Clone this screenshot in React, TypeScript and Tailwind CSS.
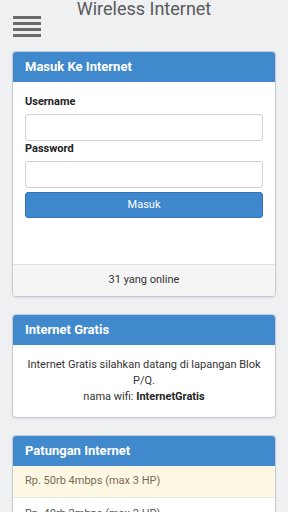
import 'react';

const Panel = ({ title, children }: { title: string; children: React.ReactNode }) => (
  <div className="rounded-[4px] border border-[#c3cbd6] bg-white shadow-[0_1px_2px_rgba(0,0,0,0.08)] overflow-hidden">
    <div className="h-[30px] bg-[#4089cd] px-3 flex items-center text-[13px] font-bold text-white">
      {title}
    </div>
    {children}
  </div>
);

const App = () => {
  return (
    <div
      className="h-[512px] w-[288px] overflow-hidden bg-[#eef0f2] px-3 text-[#333]"
      style={{ fontFamily: 'Roboto, "Noto Sans", sans-serif' }}
    >
      {/* header */}
      <div className="h-[16px] text-center text-[18px] leading-[18px] text-[#5a5a5a]">Wireless Internet</div>
      <div className="flex w-[28px] flex-col gap-[3px] ml-[1px]">
        <div className="h-[3px] bg-[#6b6b6b]" />
        <div className="h-[3px] bg-[#6b6b6b]" />
        <div className="h-[3px] bg-[#6b6b6b]" />
        <div className="h-[3px] bg-[#6b6b6b]" />
      </div>

      <div className="mt-[14px] flex flex-col gap-[17px]">
        {/* login */}
        <Panel title="Masuk Ke Internet">
          <div className="px-3 pt-3 pb-[46px]">
            <div className="text-[11px] font-bold leading-[15px] text-[#222]">Username</div>
            <input className="mt-[5px] block h-[27px] w-full rounded-[3px] border border-[#d0d0d0] bg-white" />
            <div className="text-[11px] font-bold leading-[15px] text-[#222]">Password</div>
            <input type="password" className="mt-[5px] block h-[27px] w-full rounded-[3px] border border-[#d0d0d0] bg-white" />
            <button className="mt-[4px] flex h-[26px] w-full items-center justify-center rounded-[3px] border border-[#3275b5] bg-[#3f88cd] text-[11px] text-white">
              Masuk
            </button>
          </div>
          <div className="flex h-[32px] items-center justify-center border-t border-[#e2e2e2] bg-[#f5f5f5] text-[11px] text-[#333]">
            31 yang online
          </div>
        </Panel>

        {/* free internet */}
        <Panel title="Internet Gratis">
          <div className="px-3 py-3 text-center text-[11px] leading-[16px] text-[#333]">
            Internet Gratis silahkan datang di lapangan Blok P/Q.
            <br />
            nama wifi: <b className="font-bold text-[#222]">InternetGratis</b>
          </div>
        </Panel>

        {/* patungan */}
        <Panel title="Patungan Internet">
          <div className="flex h-[32px] items-center border-b border-[#e6e6e6] bg-[#fcf8e3] px-3 text-[11px] text-[#7a6c55]">
            Rp. 50rb 4mbps (max 3 HP)
          </div>
          <div className="flex h-[32px] items-center bg-white px-3 text-[11px] text-[#555]">
            Rp. 40rb 2mbps (max 2 HP)
          </div>
        </Panel>
      </div>
    </div>
  );
};

export default App;
